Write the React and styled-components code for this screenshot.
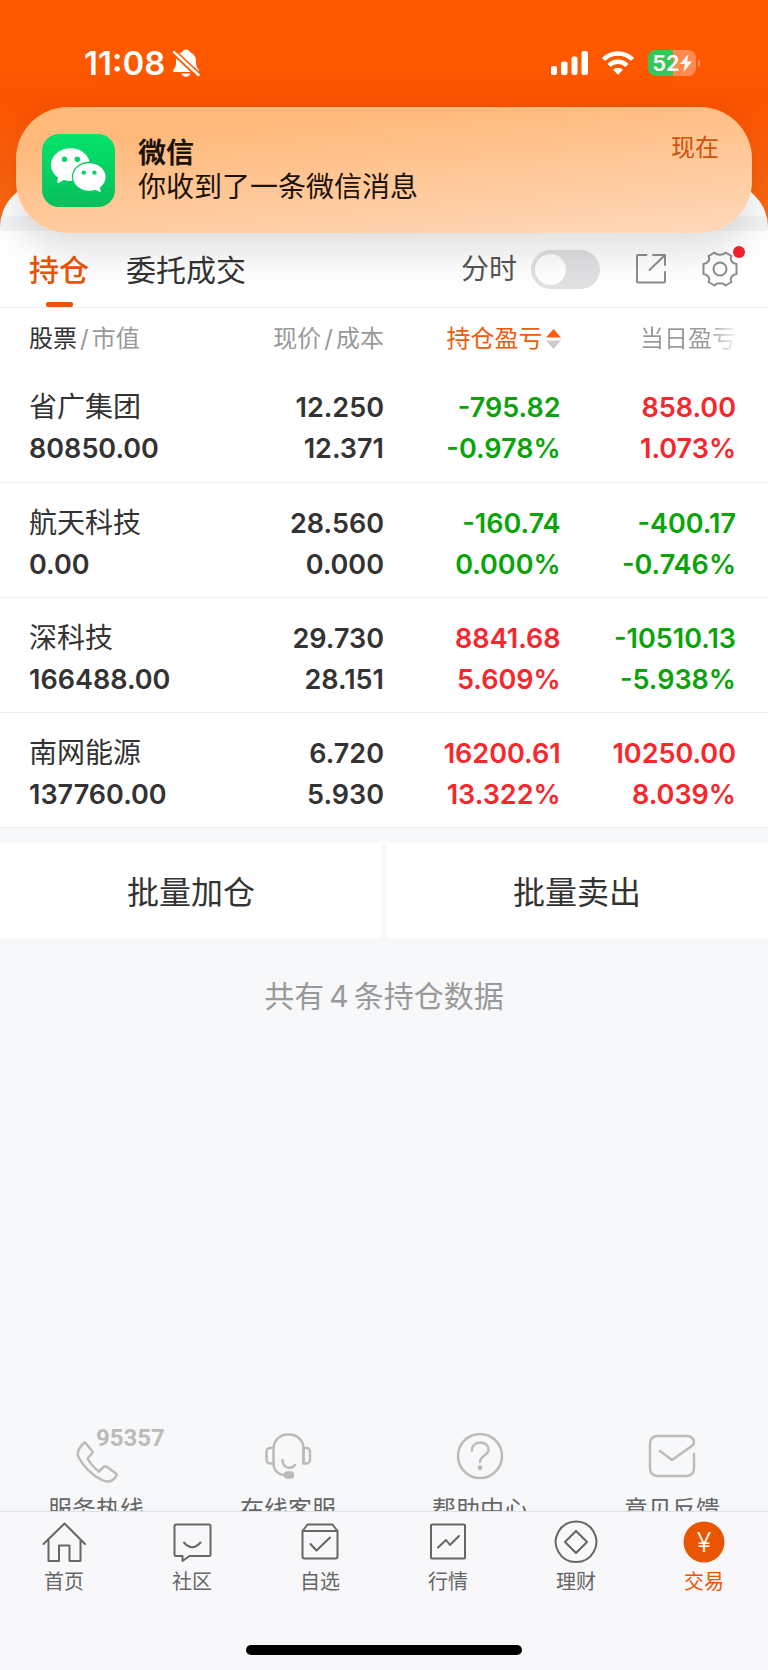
import React, { useState } from 'react'
import styled, { createGlobalStyle } from 'styled-components'

const GlobalStyle = createGlobalStyle`
    * {
        box-sizing: border-box;
    }

    body {
        margin: 0;
        background: #f7f8fa;
        color: #333;
        font-family: Inter, "Noto Sans CJK SC", sans-serif;
    }

    button {
        border: none;
        padding: 0;
        background: none;
        color: inherit;
        font: inherit;
        cursor: pointer;
    }

    a {
        color: inherit;
        text-decoration: none;
    }

    svg {
        display: block;
    }
`

const Page = styled.div`
    display: flex;
    flex-direction: column;
    min-height: 100vh;
    padding-bottom: 146px;
`

const Hero = styled.header`
    display: flex;
    flex-direction: column;
    justify-content: space-between;
    height: 231px;
    background:
        radial-gradient(circle at 0 216px, #ff6a14, transparent 120px),
        radial-gradient(circle at 100% 216px, #ff6a14, transparent 120px),
        linear-gradient(#ff5900 50px, #fb5300 110px);
`

const StatusBar = styled.div`
    display: flex;
    justify-content: space-between;
    align-items: center;
    height: 125px;
    padding: 0 68px 0 84px;
    color: #fff;
`

const StatusGroup = styled.div`
    display: flex;
    align-items: center;
    gap: ${props => props.$gap}px;
`

const Clock = styled.span`
    font-size: 33px;
    font-weight: 600;
    line-height: 40px;
`

const Battery = styled.div`
    display: flex;
    align-items: center;
    gap: 2px;

    &::after {
        content: "";
        width: 2px;
        height: 8px;
        border-radius: 0 4px 4px 0;
        background: #ff8a52;
    }
`

const BatteryBody = styled.div`
    display: flex;
    align-items: center;
    justify-content: center;
    width: 48px;
    height: 26px;
    border-radius: 8px;
    background: linear-gradient(90deg, #34c759 52%, #ff8a52 52%);
    font-size: 22px;
    font-weight: 600;
    line-height: 26px;
`

const SheetTop = styled.div`
    height: 48px;
    border-radius: 44px 44px 0 0;
    background: linear-gradient(#fff 33px, #f4f5f7 33px);
`

const Notice = styled.section`
    position: absolute;
    top: 107px;
    left: 16px;
    right: 16px;
    display: flex;
    align-items: center;
    gap: 23px;
    height: 126px;
    padding: 0 33px 0 26px;
    border-radius: 52px;
    background: linear-gradient(175deg, #ffb97a 20%, #ffd9bb);
    box-shadow: 0 16px 44px rgba(0, 0, 0, 0.14);
    color: #1c120c;
`

const NoticeBody = styled.div`
    flex: 1;
    font-size: 28px;
    line-height: 34px;
`

const NoticeTitle = styled.div`
    font-weight: 600;
`

const NoticeTime = styled.time`
    align-self: flex-start;
    margin-top: 24px;
    color: #d4500c;
    font-size: 24px;
    line-height: 34px;
`

const Toolbar = styled.div`
    display: flex;
    align-items: center;
    height: 77px;
    padding: 0 30px 0 29px;
    border-bottom: 1px solid #efeff1;
    background: #fff;
`

const Tab = styled.button`
    display: flex;
    flex-direction: column;
    align-items: center;
    justify-content: space-between;
    height: 76px;
    margin-right: 37px;
    padding-top: 19px;
    color: ${props => props.$active ? '#ea5504' : '#333'};
    font-size: 30px;
    font-weight: ${props => props.$active ? 500 : 400};
    line-height: 40px;

    &::after {
        content: "";
        width: 27px;
        height: 5px;
        border-radius: 2px;
        background: ${props => props.$active ? '#ea5504' : 'transparent'};
    }
`

const Tools = styled.div`
    display: flex;
    align-items: center;
    margin-left: auto;
    color: #8e8e8e;
`

const SwitchLabel = styled.label`
    display: flex;
    align-items: center;
    gap: 14px;
    margin-right: 36px;
    color: #555;
    font-size: 28px;
    line-height: 40px;
`

const Switch = styled.input`
    appearance: none;
    width: 69px;
    height: 39px;
    margin: 0;
    padding: 4px;
    border-radius: 20px;
    background: #e1e1e4;
    cursor: pointer;

    &::before {
        content: "";
        display: block;
        width: 31px;
        height: 31px;
        border-radius: 50%;
        background: #fff;
    }

    &:checked {
        background: #ea5504;
    }

    &:checked::before {
        margin-left: auto;
    }
`

const SettingsButton = styled.button`
    position: relative;
    margin-left: 36px;

    &::after {
        content: "";
        position: absolute;
        top: -5px;
        right: -7px;
        width: 12px;
        height: 12px;
        border-radius: 50%;
        background: #f5222d;
    }
`

const Holdings = styled.table`
    width: 100%;
    border-collapse: collapse;
    table-layout: fixed;
    background: #fff;
`

const HeadCell = styled.th`
    width: ${props => props.$width};
    height: 59px;
    padding: 3px 0 0;
    padding-left: ${props => props.$first ? '29px' : 0};
    padding-right: ${props => props.$last ? '32px' : 0};
    color: ${props => props.$sorted ? '#f25a0a' : '#999'};
    font-size: 24px;
    font-weight: 400;
    line-height: 32px;
    text-align: ${props => props.$first ? 'left' : 'right'};
    white-space: nowrap;

    b {
        color: #333;
        font-weight: 400;
    }

    i {
        margin: 0 3px;
        font-style: normal;
    }
`

const SortButton = styled.button`
    display: inline-flex;
    align-items: center;
    gap: 3px;
    vertical-align: top;
`

const Fade = styled.span`
    background: linear-gradient(90deg, #999 70%, #f4f4f4);
    background-clip: text;
    color: transparent;
`

const Row = styled.tr`
    height: 115px;
    border-bottom: 1px solid #f0f0f2;
`

const tones = { up: '#f9262b', down: '#09a409' }

const Cell = styled.td`
    padding: 20px 0 12px;
    padding-left: ${props => props.$first ? '29px' : 0};
    padding-right: ${props => props.$last ? '32px' : 0};
    color: ${props => tones[props.$tone] || '#333'};
    font-size: 27px;
    font-weight: 600;
    line-height: 41px;
    text-align: ${props => props.$first ? 'left' : 'right'};
    white-space: nowrap;
`

const StockName = styled.div`
    font-size: 28px;
    font-weight: 400;
`

const BatchActions = styled.div`
    display: grid;
    grid-template-columns: 1fr 1fr;
    gap: 4px;
    margin-top: 15px;
`

const BatchButton = styled.button`
    height: 96px;
    padding-bottom: 2px;
    background: #fff;
    font-size: 32px;
`

const Summary = styled.p`
    margin: 37px 0;
    color: #999;
    font-size: 30px;
    line-height: 40px;
    text-align: center;

    span {
        margin: 0 5px;
    }
`

const Services = styled.div`
    display: grid;
    grid-template-columns: repeat(4, 1fr);
    margin-top: auto;
`

const Service = styled.a`
    display: flex;
    flex-direction: column;
    align-items: center;
    gap: 12px;
    color: #666;
    font-size: 24px;
    line-height: 28px;
`

const ServiceIcon = styled.span`
    position: relative;
    color: #bbb;
`

const Hotline = styled.span`
    position: absolute;
    top: -8px;
    left: 24px;
    font-family: Roboto, sans-serif;
    font-size: 24px;
    font-weight: 700;
    line-height: 28px;
`

const BottomBar = styled.nav`
    position: fixed;
    bottom: 0;
    left: 0;
    right: 0;
    height: 159px;
    border-top: 1px solid #dfe0e3;
    background: #f8f8fb;
`

const BottomTabs = styled.div`
    display: grid;
    grid-template-columns: repeat(6, 1fr);
    padding-top: 8px;
`

const BottomTab = styled.a`
    display: flex;
    flex-direction: column;
    align-items: center;
    gap: 4px;
    color: ${props => props.$active ? '#ea5504' : '#666'};
    font-size: 20px;
    line-height: 28px;
`

const HomeIndicator = styled.div`
    width: 36%;
    height: 10px;
    margin: 49px auto 0;
    border-radius: 5px;
    background: #000;
`

function Icon({ size = 44, height = size, stroke = 2, children }) {
    return (
        <svg
            width={size}
            height={height}
            viewBox={`0 0 ${size} ${height}`}
            fill="none"
            stroke="currentColor"
            strokeWidth={stroke}
            strokeLinejoin="round"
            strokeLinecap="round"
            aria-hidden="true"
        >
            {children}
        </svg>
    )
}

const BellOff = () => (
    <svg width="28" height="28" viewBox="0 0 28 28" aria-hidden="true">
        <path fill="#fff" d="M14 .5C16 .5 17.300 1.500 17.800 3C21.800 4.500 24 8 24 12C24 17 25 18.500 26.500 20.500C27.300 21.800 27 23 25.500 23H2.500C1 23 .7 21.500 1.500 20.500C3.500 18.500 4 17 4 12C4 8 6.200 4.500 10.200 3C10.700 1.500 12 .5 14 .5zM9.500 24.500H18.500C18 26.500 16.300 27.700 14 27.700S10 26.500 9.500 24.500z" />
        <path stroke="#fd5500" strokeWidth="6" d="M0 1.500L28 27.500" />
        <path stroke="#fff" strokeWidth="2.500" strokeLinecap="round" d="M2 3L26.500 26" />
    </svg>
)

const Signal = () => (
    <svg width="37" height="24" viewBox="0 0 37 24" fill="#fff" aria-hidden="true">
        <rect x="0" y="15" width="6" height="9" rx="2" />
        <rect x="10" y="10.500" width="6.500" height="13.500" rx="2" />
        <rect x="20.500" y="5.500" width="6" height="18.500" rx="2" />
        <rect x="30.500" y="0" width="6.500" height="24" rx="2" />
    </svg>
)

const Wifi = () => (
    <svg width="32" height="24" viewBox="0 0 32 24" aria-hidden="true">
        <path d="M1.500 8.500a20.500 20.500 0 0 1 29 0M7 14.500a12.800 12.800 0 0 1 18 0" fill="none" stroke="#fff" strokeWidth="4.500" />
        <path d="M11 18.700a7.300 7.300 0 0 1 10 0l-5 5z" fill="#fff" />
    </svg>
)

const Bolt = () => (
    <svg width="12" height="18" viewBox="0 0 12 18" fill="#fff" aria-hidden="true">
        <path d="M8.500 0L0 10h5L3.500 18L12 7.500H7z" />
    </svg>
)

const WechatLogo = () => (
    <svg width="73" height="73" viewBox="0 0 73 73" aria-hidden="true">
        <defs>
            <linearGradient id="wechat" x2="0" y2="1">
                <stop stopColor="#04e46c" />
                <stop offset="1" stopColor="#07bf5b" />
            </linearGradient>
        </defs>
        <rect width="73" height="73" rx="17" fill="url(#wechat)" />
        <path fill="#fff" d="M28.500 14.300C17.700 14.300 9 21.800 9 31c0 5 2.700 9.500 7 12.500L15.300 48c-.1 1 .6 1.300 1.300.9l5.200-3c2.100.7 4.400 1 6.700 1C39.300 46.900 48 40.200 48 31s-8.700-16.700-19.500-16.700z" />
        <ellipse cx="47.300" cy="43" rx="17.500" ry="15.200" fill="#05cf63" />
        <path fill="#fff" d="M47.300 29.200c9 0 16.300 6.200 16.300 13.800 0 4.200-2.200 7.900-5.700 10.400l.7 3.600c.1.800-.5 1.200-1.200.8L53 55.800c-1.800.6-3.700.9-5.700.9C38.300 56.700 31 50.600 31 43s7.300-13.800 16.300-13.800z" />
        <g fill="#05d665">
            <circle cx="22.500" cy="25.300" r="2.700" />
            <circle cx="35.300" cy="25.300" r="2.700" />
            <circle cx="41.800" cy="38.600" r="2.200" />
            <circle cx="52.500" cy="38.600" r="2.200" />
        </g>
    </svg>
)

const SortArrows = () => (
    <svg width="15" height="22" viewBox="0 0 15 22" aria-hidden="true">
        <path d="M7.500 1L15 9.500H0z" fill="#fb5f10" />
        <path d="M7.500 21L15 12.500H0z" fill="#ccc" />
    </svg>
)

const stocks = [
    { name: '省广集团', value: '80850.00', price: '12.250', cost: '12.371', total: ['-795.82', '-0.978%', 'down'], day: ['858.00', '1.073%', 'up'] },
    { name: '航天科技', value: '0.00', price: '28.560', cost: '0.000', total: ['-160.74', '0.000%', 'down'], day: ['-400.17', '-0.746%', 'down'] },
    { name: '深科技', value: '166488.00', price: '29.730', cost: '28.151', total: ['8841.68', '5.609%', 'up'], day: ['-10510.13', '-5.938%', 'down'] },
    { name: '南网能源', value: '137760.00', price: '6.720', cost: '5.930', total: ['16200.61', '13.322%', 'up'], day: ['10250.00', '8.039%', 'up'] },
]

const services = [
    {
        label: '服务热线',
        badge: '95357',
        icon: <path d="M12.500 10.500Q13.500 10.500 14 11.500L20.500 19.500Q21 20.500 20 21.500L15.500 26.500Q20 34.500 27 39.500L31 35.500Q33 33.500 35 35L44 41.500Q45.500 42.700 44 44.500C40 50 35 50.500 30 48C20 43.500 11 34 6.500 25C4.500 20.500 6 16.500 12.500 10.500z" />,
    },
    {
        label: '在线客服',
        icon: (
            <>
                <path d="M9.500 32V16A14 14 0 0 1 23.500 2.500h2A14 14 0 0 1 39.500 16V31.500" />
                <path d="M9.500 16H6a3.500 3.500 0 0 0-3.500 3.500v8.500a3.500 3.500 0 0 0 3.500 3.500h3.500C9.500 38 14 43 21 43" />
                <path d="M39.500 16h3a3.500 3.500 0 0 1 3.500 3.500v8.500a3.500 3.500 0 0 1-3.500 3.500h-3z" />
                <path d="M18.500 28C18.500 36 27 38 31 33" />
                <rect x="21" y="40.500" width="8" height="5" rx="2.500" fill="currentColor" />
            </>
        ),
    },
    {
        label: '帮助中心',
        icon: (
            <>
                <circle cx="24" cy="24" r="22" />
                <path d="M16 18.500C16 13.500 19.500 10.500 24.500 10.500S32.500 14 32.500 17.500C32.500 23.500 24 23.500 24 30" />
                <circle cx="24" cy="35.700" r="1.200" fill="currentColor" />
            </>
        ),
    },
    {
        label: '意见反馈',
        icon: <path d="M46 22V37a7 7 0 0 1-7 7H9a7 7 0 0 1-7-7V11a7 7 0 0 1 7-7H39Q45 4 46 10Q46 12 44.500 13.500L24 28L12 19" />,
    },
]

const bottomTabs = [
    { label: '首页', icon: <path d="M1.500 24L22.500 3.500L43 24M6.500 20V41H17V25.500H27.500V41H38.500V20" /> },
    { label: '社区', icon: <path d="M6 4.500H39a1.500 1.500 0 0 1 1.500 1.500V34.500a1.500 1.500 0 0 1-1.500 1.500H19.500L12.500 41V36H6a1.500 1.500 0 0 1-1.500-1.500V6A1.500 1.500 0 0 1 6 4.500zM14 22.500Q22 32 30.500 22.500" /> },
    { label: '自选', icon: <path d="M4.500 11H39.500V36.500a2 2 0 0 1-2 2H6.500a2 2 0 0 1-2-2V11L9.500 4.500H34.500L39.500 11M12.500 24L18.500 30.500L32 17.500" /> },
    { label: '行情', icon: <path d="M6 4.500H38a1 1 0 0 1 1 1V37.500a1 1 0 0 1-1 1H6a1 1 0 0 1-1-1V5.500a1 1 0 0 1 1-1zM12 27.500L20 20L24 25L33 16" /> },
    { label: '理财', icon: <path d="M22 1.500a20.300 20.300 0 1 0 .1 0zM22 11L33 22L22 33L11 22z" /> },
    {
        label: '交易',
        icon: (
            <>
                <circle cx="22" cy="22" r="20.500" fill="currentColor" stroke="none" />
                <text x="22" y="32" fill="#fff" stroke="none" fontSize="27" fontWeight="300" textAnchor="middle">¥</text>
            </>
        ),
    },
]

function Notification() {
    return (
        <Notice>
            <WechatLogo />
            <NoticeBody>
                <NoticeTitle>微信</NoticeTitle>
                <div>你收到了一条微信消息</div>
            </NoticeBody>
            <NoticeTime>现在</NoticeTime>
        </Notice>
    )
}

function HoldingsTable() {
    return (
        <Holdings>
            <thead>
                <tr>
                    <HeadCell $width="28%" $first><b>股票</b><i>/</i>市值</HeadCell>
                    <HeadCell $width="22%">现价<i>/</i>成本</HeadCell>
                    <HeadCell $width="23%" $sorted>
                        <SortButton>持仓盈亏<SortArrows /></SortButton>
                    </HeadCell>
                    <HeadCell $width="27%" $last><Fade>当日盈亏</Fade></HeadCell>
                </tr>
            </thead>
            <tbody>
                {stocks.map(stock => (
                    <Row key={stock.name}>
                        <Cell $first>
                            <StockName>{stock.name}</StockName>
                            <div>{stock.value}</div>
                        </Cell>
                        <Cell>
                            <div>{stock.price}</div>
                            <div>{stock.cost}</div>
                        </Cell>
                        <Cell $tone={stock.total[2]}>
                            <div>{stock.total[0]}</div>
                            <div>{stock.total[1]}</div>
                        </Cell>
                        <Cell $tone={stock.day[2]} $last>
                            <div>{stock.day[0]}</div>
                            <div>{stock.day[1]}</div>
                        </Cell>
                    </Row>
                ))}
            </tbody>
        </Holdings>
    )
}

function App() {
    const [tab, setTab] = useState('持仓')
    const [timeline, setTimeline] = useState(false)

    return (
        <>
            <GlobalStyle />
            <Page>
                <Hero>
                    <StatusBar>
                        <StatusGroup $gap={7}>
                            <Clock>11:08</Clock>
                            <BellOff />
                        </StatusGroup>
                        <StatusGroup $gap={14}>
                            <Signal />
                            <Wifi />
                            <Battery>
                                <BatteryBody>52<Bolt /></BatteryBody>
                            </Battery>
                        </StatusGroup>
                    </StatusBar>
                    <SheetTop />
                </Hero>
                <Toolbar>
                    {['持仓', '委托成交'].map(name => (
                        <Tab key={name} $active={tab === name} onClick={() => setTab(name)}>{name}</Tab>
                    ))}
                    <Tools>
                        <SwitchLabel>
                            分时
                            <Switch
                                type="checkbox"
                                checked={timeline}
                                onChange={e => setTimeline(e.target.checked)}
                            />
                        </SwitchLabel>
                        <button aria-label="分享">
                            <Icon size={30}>
                                <path d="M10.500 1H2a1 1 0 0 0-1 1V27.500a1 1 0 0 0 1 1H28a1 1 0 0 0 1-1V18M17 1H29V11M28.500 1.500L13.500 16" />
                            </Icon>
                        </button>
                        <SettingsButton aria-label="设置">
                            <Icon size={36}>
                                <path d="M12.500 1.500C14.500 4.500 21.500 4.500 23.500 1.500L29.500 5C27.500 8.500 30 12.500 34.500 13V23C30 23.500 27.500 27.500 29.500 31L23.500 34.500C21.500 31.500 14.500 31.500 12.500 34.500L6.500 31C8.500 27.500 6 23.500 1.500 23V13C6 12.500 8.500 8.500 6.500 5z" />
                                <circle cx="18" cy="18" r="6.500" />
                            </Icon>
                        </SettingsButton>
                    </Tools>
                </Toolbar>
                <HoldingsTable />
                <BatchActions>
                    <BatchButton>批量加仓</BatchButton>
                    <BatchButton>批量卖出</BatchButton>
                </BatchActions>
                <Summary>共有<span>4</span>条持仓数据</Summary>
                <Services>
                    {services.map(item => (
                        <Service key={item.label} href="#">
                            <ServiceIcon>
                                <Icon size={48} height={52} stroke={2.5}>{item.icon}</Icon>
                                {item.badge && <Hotline>{item.badge}</Hotline>}
                            </ServiceIcon>
                            {item.label}
                        </Service>
                    ))}
                </Services>
            </Page>
            <Notification />
            <BottomBar>
                <BottomTabs>
                    {bottomTabs.map(item => (
                        <BottomTab key={item.label} href="#" $active={item.label === '交易'}>
                            <Icon>{item.icon}</Icon>
                            {item.label}
                        </BottomTab>
                    ))}
                </BottomTabs>
                <HomeIndicator />
            </BottomBar>
        </>
    )
}

export default App
